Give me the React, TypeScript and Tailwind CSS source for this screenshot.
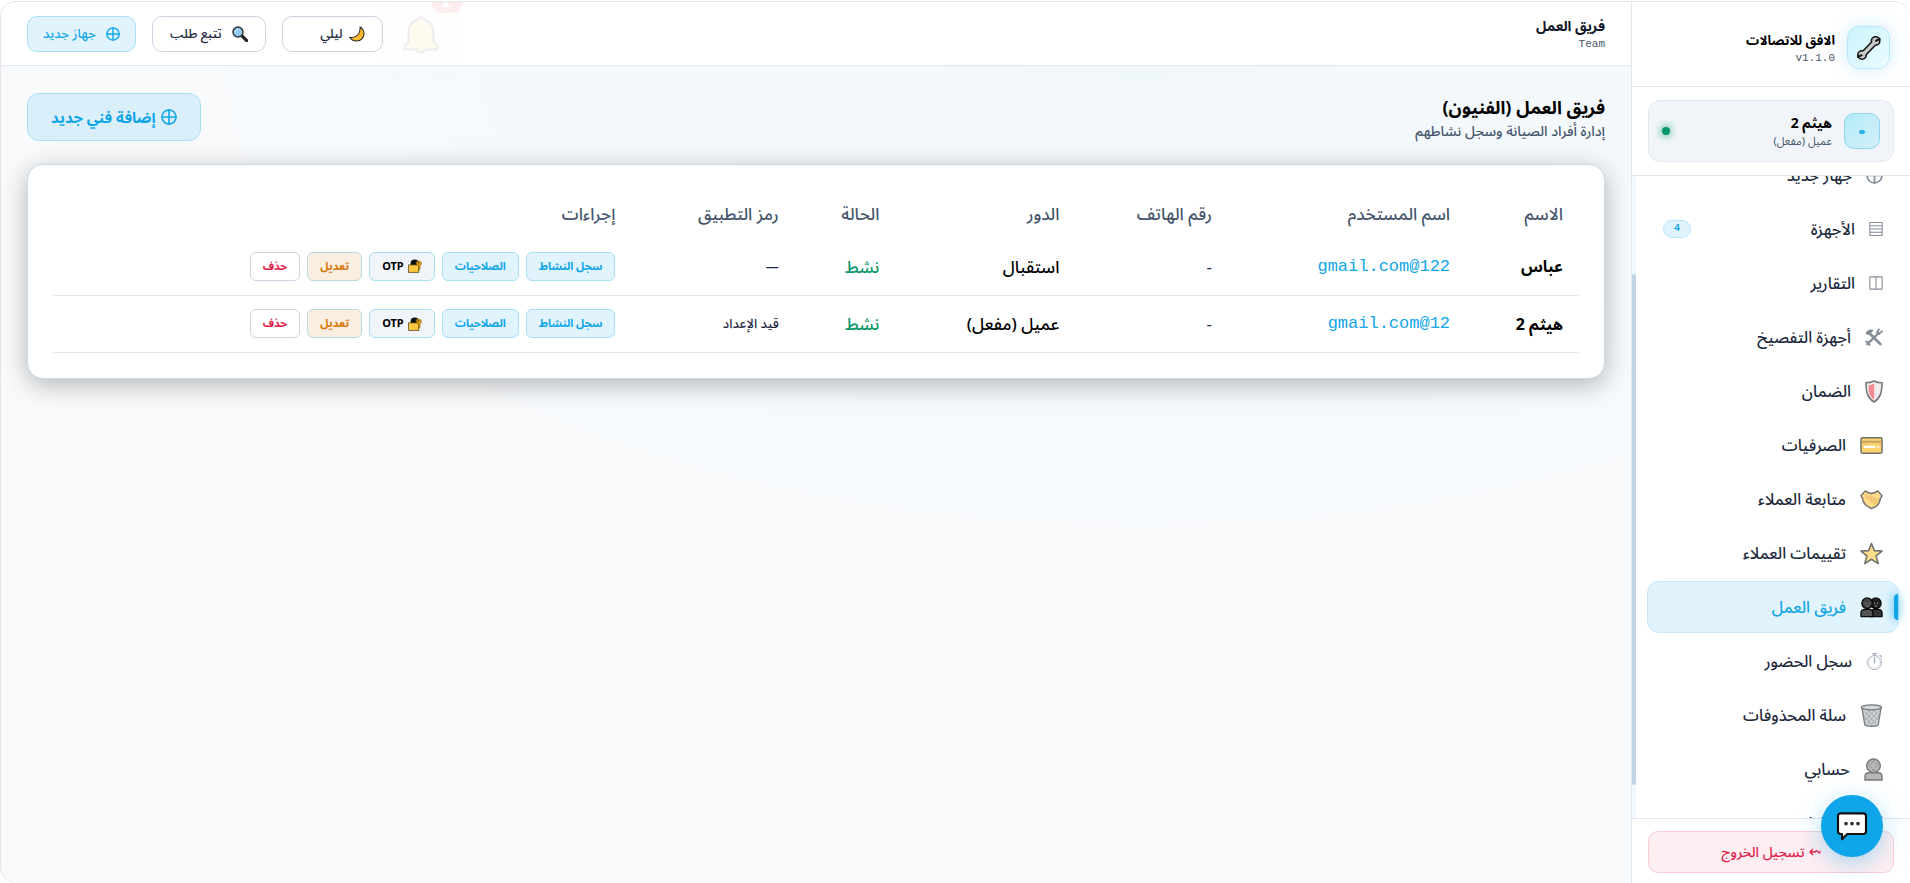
import type { ReactNode } from "react";
import clsx from "clsx";

function Emoji({
  className,
  children,
}: {
  className: string;
  children: ReactNode;
}) {
  return (
    <svg
      viewBox="0 0 24 24"
      className={clsx("shrink-0", className)}
      fill="none"
      strokeLinecap="round"
      strokeLinejoin="round"
      aria-hidden="true"
    >
      {children}
    </svg>
  );
}

function CirclePlus({ className }: { className: string }) {
  return (
    <Emoji className={className}>
      <g stroke="currentColor" strokeWidth="2.4">
        <circle cx="12" cy="12" r="10.5" />
        <path d="M12 1.5v21M1.5 12h21" />
      </g>
    </Emoji>
  );
}

function Wrench() {
  return (
    <Emoji className="size-6">
      <g stroke="#111">
        <path d="M6 18.5L18 6" strokeWidth="6.4" />
        <circle cx="18.6" cy="5" r="4.2" fill="#c8c8c8" strokeWidth="1.6" />
        <circle cx="5" cy="19" r="4.2" fill="#c8c8c8" strokeWidth="1.6" />
      </g>
      <path d="M6 18.5L18 6" stroke="#c8c8c8" strokeWidth="3.4" />
      <path d="M19 4.8l3.600-2M4.600 19.200L1 21" stroke="#111" strokeWidth="2" />
    </Emoji>
  );
}

function Rows() {
  return (
    <Emoji className="h-4 w-[14px]">
      <path
        d="M1.500 1h21v22h-21zM1.500 6.500h21M1.500 12h21M1.500 17.500h21"
        stroke="#334155"
        strokeWidth="1.800"
      />
    </Emoji>
  );
}

function Columns() {
  return (
    <Emoji className="h-4 w-[14px]">
      <path d="M1.500 1.500h21v21h-21zM12 1.500v21" stroke="#334155" strokeWidth="1.800" />
    </Emoji>
  );
}

function Tools() {
  return (
    <Emoji className="size-[18px]">
      <g stroke="#334155">
        <path d="M8 9l12.500 12.500" strokeWidth="3.600" />
        <path d="M3 21.500L18 7" strokeWidth="3" />
        <path d="M1.500 7.500C3 4 6.500 2 10.500 3L6 8.500z" fill="#334155" strokeWidth="1.500" />
        <path d="M22.500 4.500l-4 3.500-2.500-2L18.500 2M1.500 18l3 1.500L6 22.500" strokeWidth="2.600" />
      </g>
    </Emoji>
  );
}

function Shield() {
  return (
    <svg viewBox="0 0 18 23" className="h-[23px] w-[18px]" fill="none" aria-hidden="true">
      <path
        d="M9 1C6.500 2.300 3.500 2.800 1 2.800 1 12 2.500 18 9 22c6.500-4 8-10 8-19.200C14.500 2.800 11.500 2.300 9 1z"
        fill="#e5e5e5"
        stroke="#222"
        strokeWidth="1.600"
      />
      <path d="M9 3.500C7.500 4.500 5.500 5 3.500 5c0 7 1 11.500 5.500 14.500z" fill="#f03a47" />
      <path d="M9.800 4v15" stroke="#f7a3aa" strokeWidth="1.500" strokeDasharray="1.500 1.500" />
    </svg>
  );
}

function Card() {
  return (
    <Emoji className="size-[23px]">
      <rect x="1" y="4" width="22" height="16" rx="1.500" fill="#fbb50d" stroke="#111" strokeWidth="1.500" />
      <path d="M1.800 7h20.400v2.200H1.800z" fill="#a16c00" />
      <path d="M4 13.500h16" stroke="#fff" strokeWidth="2.400" strokeDasharray="12 2" strokeLinecap="butt" />
      <path d="M4 11h3" stroke="#d98b00" />
    </Emoji>
  );
}

function Handshake() {
  return (
    <Emoji className="size-[23px]">
      <path
        d="M5.500 3L1 8l2 3.500c0 3 2 5.500 4.500 7.500L12 21.500l5-2.500c2.500-2 4-4.500 4-7.500L23 8l-4.500-5-3.500 2-3 .800L9 5z"
        fill="#ffc83d"
        stroke="#111"
        strokeWidth="1.500"
      />
      <path d="M20 10.500c0 4-2 6.500-4.500 8L7 10l4-3 4 3z" fill="#eda51b" />
      <path d="M5.500 5l4 3.500L6 13z" fill="#eda51b" />
    </Emoji>
  );
}

function Star() {
  return (
    <Emoji className="size-[23px]">
      <path
        d="M12 1.500l3 7.500 8 .500-6.200 5 2.200 8L12 18l-7 4.500 2.200-8L1 9.500 9 9z"
        fill="#ffc83d"
        stroke="#111"
        strokeWidth="1.600"
      />
    </Emoji>
  );
}

function People() {
  return (
    <Emoji className="size-[23px]">
      <g stroke="#0a0a0a" strokeWidth="1.400">
        <path d="M11 21.500v-3c0-3 2-4.500 4.500-4.500H19c2.500 0 4 1.500 4 4v3.500z" fill="#333" />
        <circle cx="16.500" cy="7.500" r="5.500" fill="#222" />
        <path d="M1 21.500V18c0-2.500 1.500-4 4-4h4.500c2.500 0 4 1.500 4 4v3.500z" fill="#555" />
        <circle cx="7.500" cy="7.500" r="5.500" fill="#444" />
      </g>
      <path
        d="M6 7.200v1M9.300 7.200v1M15 7.200v1M18.300 7.200v1M6.800 10.500h1.800M15.800 10.500h1.800"
        stroke="#999"
        strokeWidth=".9"
      />
    </Emoji>
  );
}

function Stopwatch() {
  return (
    <Emoji className="size-[17px]">
      <g stroke="#64748b">
        <circle cx="12" cy="13.500" r="10" strokeWidth="1.200" />
        <circle cx="12" cy="13.500" r="8" strokeWidth="1" strokeDasharray=".8 3.200" />
        <path d="M12 1.200v2.500M9.500 1h5M20 3.500l2 2M12 7v7" strokeWidth="1.800" />
      </g>
    </Emoji>
  );
}

function Bin() {
  return (
    <Emoji className="size-[23px]">
      <path d="M2 3.500l3 18c.2 1 2.500 1.700 7 1.700s6.800-.7 7-1.700l3-18z" fill="#aab4ba" stroke="#222" strokeWidth="1.400" />
      <ellipse cx="12" cy="3.500" rx="10.500" ry="2.600" fill="#b8c1c7" stroke="#222" strokeWidth="1.400" />
      <path
        d="M5 8l12 13M9 7l10 10M14 7l6 6M4.500 13l8 9M19 8L7 21M15 7L5 17M10 7l-5 5M19.500 13l-8 9"
        stroke="#5d676e"
        strokeWidth=".9"
      />
    </Emoji>
  );
}

function Person() {
  return (
    <svg viewBox="0 0 19 23" className="h-[23px] w-[19px]" fill="none" aria-hidden="true">
      <path d="M1 22v-3.500C1 16 2.500 14.800 5 14.800h9c2.500 0 4 1.200 4 3.700V22z" fill="#888" stroke="#222" strokeWidth="1.400" />
      <circle cx="9.500" cy="7.800" r="6.800" fill="#888" stroke="#222" strokeWidth="1.400" />
      <path d="M3 7.200c3 0 5.500-2 6.500-4.700 1 2.200 3 3.700 6.500 4.500" stroke="#555" />
      <path d="M7 8.200v1.200M12 8.200v1.200M8 11.800h3" stroke="#222" />
    </svg>
  );
}

function Magnifier() {
  return (
    <Emoji className="size-4">
      <path d="M14.500 14.500l7.500 7.500" stroke="#222" strokeWidth="5" />
      <circle cx="9" cy="9" r="7.500" fill="#8fcaf5" stroke="#333" strokeWidth="2.200" />
      <path d="M5.500 8.500Q6 5.500 9 5" stroke="#d6eeff" strokeWidth="1.500" />
    </Emoji>
  );
}

function Moon() {
  return (
    <Emoji className="size-4">
      <path
        d="M16.500 1.500c3.500 2 6 5.500 6 10 0 6-4.500 11-11 11-4.500 0-8.500-2-10.500-5.500 4.500.8 9-.2 12-3.500 3-3.300 4.300-7.500 3.500-12z"
        fill="#fbb829"
        stroke="#2b2b2b"
        strokeWidth="1.600"
      />
    </Emoji>
  );
}

function Lock() {
  return (
    <Emoji className="size-[14px]">
      <path d="M6 11V7c0-6 11-6 11 0v4z" fill="#111" stroke="#111" strokeWidth="3" />
      <rect x="1.500" y="10" width="17" height="13" fill="#ffc83d" stroke="#3b2f0c" strokeWidth="1.200" />
      <path
        d="M14 5.500c1.500-3 7-2.500 8.500.5 1 2.500-.5 5-2 5.500v7h-2.500v-7c-2.500-.5-4.500-3-4-6z"
        fill="#e6a100"
        stroke="#6b4a00"
        strokeWidth=".9"
      />
      <circle cx="18" cy="6.500" r="1.200" fill="#222" />
    </Emoji>
  );
}

function Bell() {
  return (
    <Emoji className="size-10">
      <path
        d="M12 1.500c-1 0-1.800.6-2 1.600C6.500 4 4.500 6.500 4.500 10v6L2 18.500v2.200h7.500c.3 1 1.200 1.800 2.500 1.800s2.200-.8 2.500-1.800H22v-2.200L19.500 16v-6c0-3.500-2-6-5.500-6.900-.2-1-1-1.600-2-1.600z"
        fill="#ffc83d"
        stroke="#333"
        strokeWidth="1.300"
      />
    </Emoji>
  );
}

function Chat() {
  return (
    <Emoji className="size-8">
      <path
        d="M4 2.500h16.500a2 2 0 012 2V16a2 2 0 01-2 2H8.500L4.500 22v-4H3.500a2 2 0 01-2-2V4.500a2 2 0 012-2z"
        fill="#fff"
        stroke="#111"
        strokeWidth="1.600"
      />
      <g fill="#333">
        <circle cx="7.500" cy="10.200" r="1.400" />
        <circle cx="12" cy="10.200" r="1.400" />
        <circle cx="16.500" cy="10.200" r="1.400" />
      </g>
    </Emoji>
  );
}

const navItems = [
  { label: "جهاز جديد", icon: <CirclePlus className="size-[17px] text-slate-700" /> },
  { label: "الأجهزة", icon: <Rows />, count: 4 },
  { label: "التقارير", icon: <Columns /> },
  { label: "أجهزة التفصيخ", icon: <Tools /> },
  { label: "الضمان", icon: <Shield /> },
  { label: "الصرفيات", icon: <Card /> },
  { label: "متابعة العملاء", icon: <Handshake /> },
  { label: "تقييمات العملاء", icon: <Star /> },
  { label: "فريق العمل", icon: <People />, active: true },
  { label: "سجل الحضور", icon: <Stopwatch /> },
  { label: "سلة المحذوفات", icon: <Bin /> },
  { label: "حسابي", icon: <Person /> },
  { label: "الإعدادات", icon: <Columns /> },
];

const members = [
  { name: "عباس", username: "122@gmail.com", phone: "-", role: "استقبال", status: "نشط", code: "—" },
  { name: "هيثم 2", username: "12@gmail.com", phone: "-", role: "عميل (مفعل)", status: "نشط", code: "قيد الإعداد" },
];

function Sidebar() {
  return (
    <aside className="flex w-[279px] shrink-0 flex-col border-l border-slate-200 bg-white">
      <div className="flex items-center gap-3 border-b border-slate-200 px-5 pt-6 pb-[17px]">
        <div className="flex size-[43px] items-center justify-center rounded-xl border border-sky-200 bg-linear-to-br from-[#cbf3fb] to-[#ecfcff] shadow-[0_0_18px_rgba(14,165,233,0.2)]">
          <Wrench />
        </div>
        <div>
          <p className="text-[13px] leading-5 font-bold text-black">الافق للاتصالات</p>
          <p className="font-['Liberation_Mono',monospace] text-[11px] leading-4 text-slate-600">
            v1.1.0
          </p>
        </div>
      </div>

      <div className="border-b border-slate-200 px-4 py-[13px]">
        <div className="flex items-center gap-3 rounded-xl border border-slate-200 bg-slate-100 px-[13px] py-3">
          <div className="flex size-9 items-center justify-center rounded-[10px] border border-[#8fd6f0] bg-linear-to-br from-[#b3ebf7] to-[#d3effa] font-['DejaVu_Sans',sans-serif] text-[11px] font-bold text-[#0ea5e9]">
            ه
          </div>
          <div className="flex-1">
            <p className="text-sm leading-5 font-bold text-black">هيثم 2</p>
            <p className="text-[11px] leading-4 text-slate-600">عميل (مفعل)</p>
          </div>
          <span className="size-2 rounded-full bg-[#059669] shadow-[0_0_8px_#059669]" />
        </div>
      </div>

      <div className="flex min-h-0 flex-1">
        <nav className="min-w-0 flex-1 overflow-hidden pr-[11px] pl-[11px]">
          <ul className="-mt-[27px] flex flex-col gap-[2px]">
            {navItems.map((item) => (
              <li key={item.label}>
                <a
                  href="#"
                  className={clsx(
                    "relative flex h-[52px] items-center gap-[14px] rounded-xl border px-[15px] text-base font-medium",
                    item.active
                      ? "border-[#c5e9fa] bg-[#e1f4fd] text-[#0ea5e9]"
                      : "border-transparent text-slate-800",
                  )}
                >
                  <span className={item.active ? "" : "opacity-60"}>{item.icon}</span>
                  <span className="flex-1">{item.label}</span>
                  {item.count && (
                    <span className="rounded-full border border-sky-200 bg-[#e1f4fd] px-[10px] font-['Liberation_Mono',monospace] text-[10px] leading-4 font-bold text-[#0ea5e9]">
                      {item.count}
                    </span>
                  )}
                  {item.active && (
                    <span className="absolute right-0 h-[26px] w-1 rounded-l bg-[#0ea5e9] shadow-[0_0_10px_#0ea5e9]" />
                  )}
                </a>
              </li>
            ))}
          </ul>
        </nav>
        <div className="w-1 bg-sky-50 pt-[98px]">
          <div className="h-[94%] rounded-sm bg-[#c0d2e3]" />
        </div>
      </div>

      <div className="border-t border-slate-200 px-4 pt-3 pb-[10px]">
        <button className="flex h-[42px] w-full items-center justify-center gap-1 rounded-[10px] border border-[#fbcdd6] bg-[#feeef1] text-sm font-medium text-[#e11d48]">
          <svg viewBox="0 0 12 8" className="h-2 w-3" fill="none" stroke="currentColor" strokeWidth="1.300" aria-hidden="true">
            <path d="M4 1L1 4l3 3M1 4h5q2-2.500 3.200 0t2-1" />
          </svg>
          تسجيل الخروج
        </button>
      </div>
    </aside>
  );
}

function Topbar() {
  return (
    <header className="flex h-16 shrink-0 items-center justify-between border-b border-slate-200 bg-white px-[26px]">
      <div>
        <p className="text-sm leading-5 font-bold text-slate-900">فريق العمل</p>
        <p className="font-['Liberation_Mono',monospace] text-[11px] leading-4 text-slate-600">
          Team
        </p>
      </div>
      <div className="relative flex gap-4 text-[13px] font-medium">
        <button
          aria-label="الإشعارات"
          className="absolute -top-5 left-full flex h-[78px] w-[77px] items-center justify-center rounded-2xl border border-slate-200 bg-slate-50 opacity-[0.08]"
        >
          <Bell />
          <span className="absolute -top-2 -right-1 h-6 w-8 rounded-full bg-red-500 text-base font-bold text-white">
            2
          </span>
        </button>
        <button className="flex h-9 w-[101px] items-center gap-[6px] rounded-[10px] border border-slate-300 bg-white px-[17px] text-slate-800">
          <Moon />
          ليلي
        </button>
        <button className="flex h-9 items-center gap-[10px] rounded-[10px] border border-slate-300 bg-white px-[17px] text-slate-800">
          <Magnifier />
          تتبع طلب
        </button>
        <button className="flex h-9 items-center gap-[10px] rounded-[10px] border border-[#a8def6] bg-[#e1f4fd] px-[15px] text-[#0ea5e9]">
          <CirclePlus className="size-[14px]" />
          جهاز جديد
        </button>
      </div>
    </header>
  );
}

const action =
  "flex h-[29px] items-center gap-1 rounded-md border px-3 text-[11px] font-bold";

function TeamTable() {
  return (
    <div className="rounded-2xl border border-[#cbd8e6] bg-white p-[25px] shadow-[0_6px_26px_rgba(0,0,0,0.28)]">
      <table className="w-full table-fixed text-right text-[17px]">
        <thead>
          <tr className="h-12 text-slate-600">
            <th className="w-[7.4%] px-4 font-medium">الاسم</th>
            <th className="w-[15.6%] px-4 font-medium">اسم المستخدم</th>
            <th className="w-[10%] px-4 font-medium">رقم الهاتف</th>
            <th className="w-[11.8%] px-4 font-medium">الدور</th>
            <th className="w-[6.6%] px-4 font-medium">الحالة</th>
            <th className="w-[10.7%] px-4 font-medium">رمز التطبيق</th>
            <th className="px-4 font-medium">إجراءات</th>
          </tr>
        </thead>
        <tbody>
          {members.map((m) => (
            <tr key={m.username} className="h-[57px] border-b border-slate-200">
              <td className="px-4 text-base font-bold text-black">{m.name}</td>
              <td className="px-4 font-['Liberation_Mono',monospace] text-[#0ea5e9]">
                {m.username}
              </td>
              <td className="px-4 text-slate-800">{m.phone}</td>
              <td className="px-4 font-medium text-black">{m.role}</td>
              <td className="px-4 font-medium text-[#059669]">{m.status}</td>
              <td className="px-4 text-[13px] font-medium text-slate-800">{m.code}</td>
              <td className="px-4">
                <div className="flex gap-[7px]">
                  <button className={clsx(action, "border-[#a8def6] bg-[#e1f4fd] text-[#0ea5e9]")}>
                    سجل النشاط
                  </button>
                  <button className={clsx(action, "border-[#a8def6] bg-[#e1f4fd] text-[#0ea5e9]")}>
                    الصلاحيات
                  </button>
                  <button className={clsx(action, "border-[#a8def6] bg-slate-100 text-black")}>
                    <Lock />
                    OTP
                  </button>
                  <button className={clsx(action, "border-[#b9dbe0] bg-[#faeee1] text-[#d97706]")}>
                    تعديل
                  </button>
                  <button className={clsx(action, "border-slate-300 bg-white text-[#e11d48]")}>
                    حذف
                  </button>
                </div>
              </td>
            </tr>
          ))}
        </tbody>
      </table>
    </div>
  );
}

export default function App() {
  return (
    <div
      dir="rtl"
      className="h-screen bg-white pt-px font-['Noto_Sans','Noto_Sans_Arabic',sans-serif]"
    >
      <div className="flex h-full overflow-hidden rounded-2xl border-t border-l border-neutral-200 bg-slate-50">
        <Sidebar />
        <div className="flex min-w-0 flex-1 flex-col">
          <Topbar />
          <main className="flex-1 bg-[radial-gradient(ellipse_60%_60%_at_70%_0%,rgba(14,165,233,0.03),transparent)] px-[26px] pt-[27px]">
            <div className="mb-[23px] flex items-center justify-between">
              <div>
                <h1 className="text-lg leading-7 font-bold text-black">فريق العمل (الفنيون)</h1>
                <p className="text-sm leading-5 font-medium text-slate-600">
                  إدارة أفراد الصيانة وسجل نشاطهم
                </p>
              </div>
              <button className="flex h-12 items-center gap-[6px] rounded-xl border border-[#a8def6] bg-[#dbeffa] px-[23px] text-[15px] font-bold text-[#0ea5e9]">
                <CirclePlus className="size-4" />
                إضافة فني جديد
              </button>
            </div>
            <TeamTable />
          </main>
        </div>
      </div>
      <button
        aria-label="الدردشة"
        className="fixed right-[27px] bottom-[26px] flex size-[62px] items-center justify-center rounded-full bg-[#0ea5e9] shadow-[0_6px_24px_rgba(14,165,233,0.35)]"
      >
        <Chat />
      </button>
    </div>
  );
}
